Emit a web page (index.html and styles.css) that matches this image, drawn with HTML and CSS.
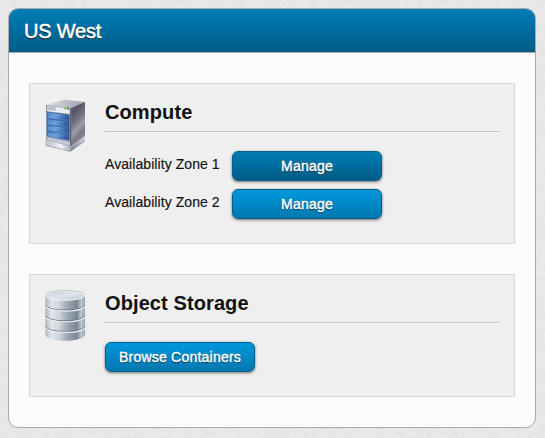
FILE: index.html
```html
<!DOCTYPE html>
<html lang="en">
<head>
<meta charset="utf-8">
<title>US West</title>
<link rel="stylesheet" href="styles.css">
</head>
<body>
<svg class="grain" aria-hidden="true"><filter id="paper"><feTurbulence type="fractalNoise" baseFrequency=".22" numOctaves="3" seed="4"/><feColorMatrix values="0 0 0 0 .5  0 0 0 0 .5  0 0 0 0 .5  .3 0 0 0 -.12"/></filter><rect width="100%" height="100%" filter="url(#paper)"/></svg>
<main class="panel">
  <h1 class="panel-title">US West</h1>
  <div class="panel-body">
    <section class="card compute">
      <svg class="icon" viewBox="24 24 132 168">
        <defs>
          <linearGradient id="side" x1="0" y1="0" x2=".35" y2="1"><stop offset="0" stop-color="#757686"/><stop offset=".25" stop-color="#555768"/><stop offset=".5" stop-color="#747583"/><stop offset=".68" stop-color="#9c9da8"/><stop offset=".85" stop-color="#777883"/><stop offset="1" stop-color="#8d8e9a"/></linearGradient>
          <linearGradient id="bay" x1="0" x2="1" y2=".3"><stop offset="0" stop-color="#4c86c9"/><stop offset=".5" stop-color="#6ba3de"/><stop offset="1" stop-color="#345fa6"/></linearGradient>
          <linearGradient id="base" x1="0" x2="1"><stop offset="0" stop-color="#bcbdc9"/><stop offset=".4" stop-color="#f1f1f7"/><stop offset=".6" stop-color="#b8b9c5"/><stop offset=".68" stop-color="#858694"/><stop offset="1" stop-color="#d0d0d9"/></linearGradient>
          <linearGradient id="lid" x1="0" x2="1"><stop offset="0" stop-color="#dcdde3"/><stop offset="1" stop-color="#9fa0aa"/></linearGradient>
        </defs>
        <path d="M28 149L69 135L147 139V153L103 185L28 167Z" fill="url(#base)"/>
        <path d="M29 166L103 184L147 153" fill="none" stroke="#9394a1" stroke-width="2"/>
        <path d="M30 45L85 29L147 36L106 53Z" fill="url(#lid)"/>
        <path d="M105 53L147 36L147 138L105 169Z" fill="url(#side)"/>
        <path d="M105 170L147 140" stroke="#d9d9e2" stroke-width="2"/>
        <path d="M30 45L106 53V170L30 149Z" fill="#8d98ad"/>
        <path d="M34 48L101 55V72L34 64Z" fill="#e9ebef"/>
        <path d="M36 49L59 52V62L36 60Z" fill="#bbbfc8"/>
        <path d="M84 51L92 52V59L84 58Z" fill="#85c653"/><path d="M93 52L100 53V59L93 58Z" fill="#6667b4"/>
        <path d="M33 65L100 74V151L33 138Z" fill="#31588f"/>
        <g fill="url(#bay)">
          <path d="M34 67L67 72L97 75V88Q80 94 67 88L34 83Z"/>
          <path d="M34 87L67 92L97 94V106Q79 112 66 107L34 102Z"/>
          <path d="M34 106L67 111L97 113V126Q79 132 66 126L34 121Z"/>
          <path d="M34 125L67 130L97 132V145Q79 150 66 145L34 137Z"/>
        </g>
        <path d="M34 84L66 89L97 91M34 103L66 108L97 110M34 122L66 127L97 129" stroke="#93bae6" fill="none"/>
        <path d="M33 141L102 156V167L33 149Z" fill="#c5c9d5"/>
        <path d="M102 54L106 53V169L102 168Z" fill="#626474"/>
      </svg>
      <div class="content">
        <h2>Compute</h2>
        <div class="zone"><span>Availability Zone 1</span><button class="btn pressed">Manage</button></div>
        <div class="zone"><span>Availability Zone 2</span><button class="btn">Manage</button></div>
      </div>
    </section>
    <section class="card storage">
      <svg class="icon" viewBox="24 24 132 156">
        <defs>
          <linearGradient id="disk" x1="0" x2="1"><stop offset="0" stop-color="#aab3be"/><stop offset=".15" stop-color="#e1e5ea"/><stop offset=".35" stop-color="#ced5dc"/><stop offset=".55" stop-color="#9da8b4"/><stop offset=".8" stop-color="#7a8693"/><stop offset=".9" stop-color="#bdc5cf"/><stop offset="1" stop-color="#9ba5b0"/></linearGradient>
          <linearGradient id="disktop" x1="0" y1="0" x2="1" y2="1"><stop offset="0" stop-color="#c5ccd5"/><stop offset=".5" stop-color="#e0e5eb"/><stop offset="1" stop-color="#bcc4ce"/></linearGradient>
        </defs>
        <path d="M28 41H147V158C138 182 37 182 28 158Z" fill="url(#disk)"/>
        <path d="M29 70C37 89 138 89 146 70M29 102C37 121 138 121 146 102M29 134C37 153 138 153 146 134" fill="none" stroke="#5c6773" stroke-width="2.5"/>
        <path d="M29 73C37 92 138 92 146 73M29 105C37 124 138 124 146 105M29 137C37 156 138 156 146 137" fill="none" stroke="#e9ecf0" stroke-width="3.5"/>
        <ellipse cx="87.5" cy="41" rx="58" ry="14" fill="url(#disktop)" stroke="#f1f3f5" stroke-width="3"/>
        <path d="M29 37C37 22 138 22 146 37" fill="none" stroke="#8f98a2" stroke-width="1.5"/>
      </svg>
      <div class="content">
        <h2>Object Storage</h2>
        <button class="btn">Browse Containers</button>
      </div>
    </section>
  </div>
</main>
</body>
</html>
```

FILE: styles.css
```css
* { box-sizing: border-box; }
body {
  margin: 0;
  padding: 8px 9px 10px 8px;
  height: 438px;
  overflow: hidden;
  background: #e9e9e9;
  color: #111;
  font: 14px/20px "Liberation Sans", Arial, sans-serif;
}
.grain { position: absolute; inset: 0; width: 100%; height: 100%; z-index: -1; }
.panel {
  height: 420px;
  overflow: hidden;
  background: #fbfbfb;
  border: 1px solid #aaa;
  border-radius: 10px;
}
.panel-title {
  height: 44px;
  margin: 0;
  padding: 0 15px;
  border-bottom: 1px solid #aaa;
  background: linear-gradient(#007db5, #005c86);
  color: #fff;
  font-size: 20px;
  font-weight: 400;
  line-height: 44px;
  letter-spacing: -.2px;
  text-shadow: 0 1px 1px #000;
  -webkit-text-stroke: .5px #fff;
}
.panel-body { display: flex; flex-direction: column; gap: 30px; padding: 30px 20px; }
.card {
  display: flex;
  align-items: flex-start;
  gap: 19px;
  padding: 15px;
  background: #efefef;
  border: 1px solid #d8d8d8;
}
.compute { height: 161px; }
.storage { height: 123px; }
.icon { flex: none; width: 44px; margin-left: -1px; }
.compute .icon { height: 56px; margin-top: -1px; }
.storage .icon { height: 52px; }
.content { flex: 1; margin-left: -2px; }
h2 {
  height: 33px;
  margin: 0 0 19px;
  border-bottom: 1px solid #c5c5c5;
  font-size: 20px;
  line-height: 27px;
  letter-spacing: .1px;
}
.zone { display: flex; height: 30px; margin-bottom: 8px; }
.zone span { width: 127px; padding-top: 3px; white-space: nowrap; letter-spacing: .07px; -webkit-text-stroke: .15px #111; }
.btn {
  width: 150px;
  height: 30px;
  padding: 0;
  border: 1px solid #005f8b;
  border-radius: 6px;
  background: linear-gradient(#0098dc, #0078b0);
  box-shadow: 0 1px 3px rgba(0, 0, 0, .55);
  color: #fff;
  font: 14px/28px "Liberation Sans", Arial, sans-serif;
  letter-spacing: .22px;
  text-shadow: 0 1px 1px rgba(0, 0, 0, .8);
  -webkit-text-stroke: .4px #fff;
}
.btn.pressed { background: linear-gradient(#007db5, #005c86); }
```
